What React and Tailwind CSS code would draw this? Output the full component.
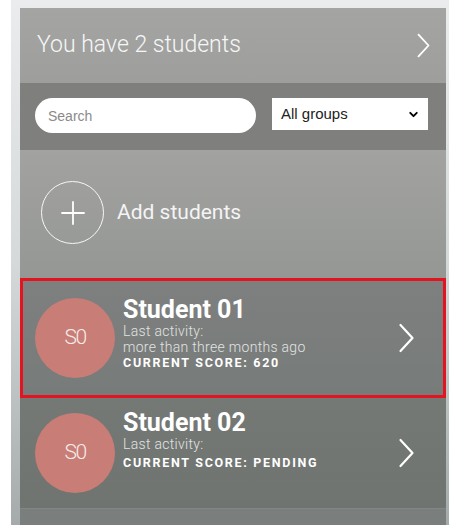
import { ChevronDown } from "lucide-react"

const students = [
    { name: "Student 01", initials: "S0", activity: "more than three months ago", score: "620" },
    { name: "Student 02", initials: "S0", activity: "", score: "PENDING" },
]

const Chevron = ({ className }) => (
    <svg viewBox="0 0 16 30" className={className} fill="none" stroke="currentColor" strokeWidth="2.2" strokeLinecap="round" strokeLinejoin="round">
        <path d="M2 2 L14 15 L2 28" />
    </svg>
)

const StudentRow = ({ student, selected }) => (
    <div className={selected
        ? "flex items-center h-[120px] border-[3px] border-[#e3131f] bg-gradient-to-b from-[#7d807e] to-[#777b79] pl-[12px] pr-[28px]"
        : "flex items-center h-[110px] bg-gradient-to-b from-[#757976] to-[#6f7471] pl-[15px] pr-[31px]"}>
        <div className="w-[80px] h-[80px] rounded-full bg-[#c87d76] flex items-center justify-center shrink-0">
            <span className="text-[21px] font-light text-[#f7ecea] tracking-[-1.5px]">{student.initials}</span>
        </div>
        <div className={selected ? "ml-[8px] flex-1 self-start mt-[16px] flex flex-col text-white" : "ml-[8px] flex-1 self-start mt-[12px] flex flex-col text-white"}>
            <h3 className="text-[25px] font-bold leading-[25px]">{student.name}</h3>
            <p className="text-[14px] font-light leading-[16px] tracking-[0.3px] text-[#e2e4e3] mt-[1px]">Last activity:</p>
            {student.activity && <p className="text-[14px] font-light leading-[16px] tracking-[0.3px] text-[#e2e4e3]">{student.activity}</p>}
            <p className={selected ? "text-[12.5px] font-bold tracking-[1.7px] leading-[15px]" : "text-[12.5px] font-bold tracking-[1.7px] leading-[15px] mt-[3px]"}>CURRENT SCORE: {student.score}</p>
        </div>
        <Chevron className="w-[17px] h-[30px] text-white" />
    </div>
)

const App = () => {
    return (
        <div className="flex h-[525px] bg-white overflow-hidden" style={{ fontFamily: "Roboto, 'Liberation Sans', sans-serif" }}>
            <div className="ml-[11px] w-[438px] h-full pt-[8px] pl-[9px] pr-[3px] bg-gradient-to-b from-[#ebeced] via-[#d5d9d9] to-[#a5abab]">
                <div className="w-[426px] h-full flex flex-col">
                    <div className="h-[75px] shrink-0 flex items-center justify-between pl-[17px] pr-[15px] bg-gradient-to-b from-[#a4a5a3] to-[#9e9f9d]">
                        <h2 className="text-[23px] font-light text-[#f7f7f7]">You have 2 students</h2>
                        <Chevron className="w-[15px] h-[25px] text-white" />
                    </div>
                    <div className="h-[67px] shrink-0 flex items-start gap-[16px] pt-[15px] pl-[15px] pr-[18px] bg-[#7f807e]" style={{ fontFamily: "'Liberation Sans', Arial, sans-serif" }}>
                        <input type="text" placeholder="Search" className="w-[221px] h-[35px] rounded-full bg-white px-[13px] text-[14px] text-[#555] placeholder:text-[#8a8a8a] outline-none" />
                        <div className="w-[156px] h-[32px] bg-white flex items-center justify-between pl-[9px] pr-[8px]">
                            <span className="text-[15px] text-[#222]">All groups</span>
                            <ChevronDown className="w-[13px] h-[13px] text-black" strokeWidth={3.5} />
                        </div>
                    </div>
                    <div className="h-[128px] shrink-0 flex items-center pl-[21px] pb-[3px] bg-gradient-to-b from-[#a2a3a1] to-[#959795]">
                        <div className="w-[63px] h-[63px] rounded-full border-[1.5px] border-white/90 flex items-center justify-center">
                            <svg viewBox="0 0 24 24" className="w-[24px] h-[24px]" stroke="white" strokeWidth="1.8" strokeLinecap="round">
                                <path d="M12 1 V23 M1 12 H23" />
                            </svg>
                        </div>
                        <span className="ml-[13px] text-[21px] text-[#f4f4f4]">Add students</span>
                    </div>
                    <StudentRow student={students[0]} selected />
                    <StudentRow student={students[1]} />
                    <div className="flex-1 border-t border-[#828684] bg-[#7a7e7c]" />
                </div>
            </div>
        </div>
    )
}
export default App
